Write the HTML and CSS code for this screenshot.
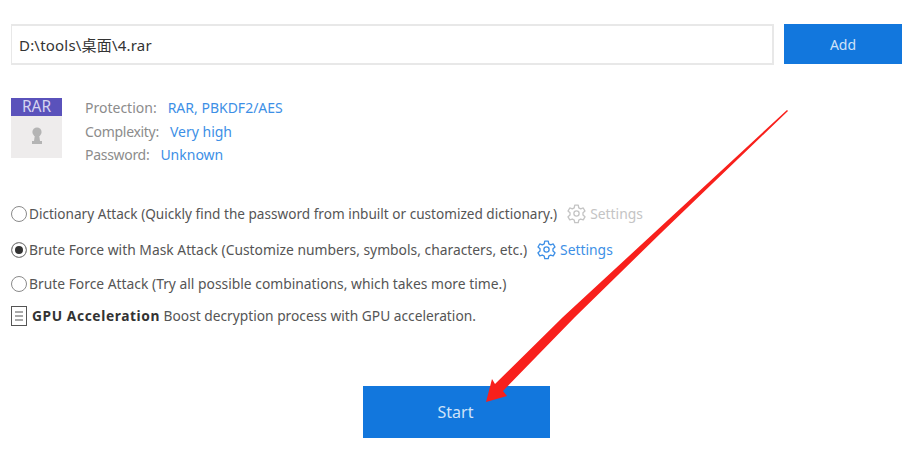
FILE: index.html
```html
<!DOCTYPE html>
<html lang="en">
<head>
    <meta charset="UTF-8">
    <title>Password recovery</title>
    <link rel="stylesheet" href="styles.css">
</head>
<body>

    <div class="page">
        <!-- file row -->
        <div class="file-row">
            <div class="file-path">D:\tools\桌面\4.rar</div>
            <button class="btn btn-add">Add</button>
        </div>

        <!-- archive info -->
        <div class="info">
            <div class="rar-icon">
                <div class="rar-label">RAR</div>
                <div class="rar-body">
                    <svg width="12" height="18" viewBox="0 0 12 18">
                        <circle cx="6" cy="5" r="4.6" fill="#b4b4b4"/>
                        <path d="M4 7h4l1 7H11v3H1v-3h2z" fill="#b4b4b4"/>
                    </svg>
                </div>
            </div>
            <div class="info-lines">
                <div><span class="info-key">Protection:</span><span class="info-val">RAR, PBKDF2/AES</span></div>
                <div><span class="info-key info-key-short">Complexity:</span><span class="info-val">Very high</span></div>
                <div><span class="info-key info-key-short">Password:</span><span class="info-val">Unknown</span></div>
            </div>
        </div>

        <!-- attack types -->
        <div class="options">
            <div class="option option-first">
                <span class="radio"></span>
                <span class="option-text text-dict">Dictionary Attack (Quickly find the password from inbuilt or customized dictionary.)</span>
                <span class="settings settings-off">
                    <svg class="gear" viewBox="0 0 24 24"><path d="M10 2.5h4l.6 3 2.2 1.2 2.9-1 2 3.5-2.3 2v2.6l2.3 2-2 3.5-2.900-1-2.200 1.200-.6 3h-4l-.6-3-2.200-1.200-2.900 1-2-3.500 2.300-2v-2.600l-2.300-2 2-3.500 2.900 1 2.200-1.200z"/><circle cx="12" cy="12" r="3"/></svg>
                    Settings
                </span>
            </div>
            <div class="option option-second">
                <span class="radio radio-on"></span>
                <span class="option-text">Brute Force with Mask Attack (Customize numbers, symbols, characters, etc.)</span>
                <span class="settings">
                    <svg class="gear" viewBox="0 0 24 24"><path d="M10 2.5h4l.6 3 2.2 1.2 2.9-1 2 3.5-2.3 2v2.6l2.3 2-2 3.5-2.900-1-2.200 1.200-.6 3h-4l-.6-3-2.200-1.200-2.900 1-2-3.500 2.300-2v-2.600l-2.300-2 2-3.500 2.900 1 2.200-1.200z"/><circle cx="12" cy="12" r="3"/></svg>
                    Settings
                </span>
            </div>
            <div class="option option-third">
                <span class="radio"></span>
                <span class="option-text">Brute Force Attack (Try all possible combinations, which takes more time.)</span>
            </div>
            <div class="option gpu">
                <svg class="gpu-icon" viewBox="0 0 16 20"><rect x=".5" y=".5" width="15" height="19"/><path d="M4 6h8M4 10h8M4 14h8"/></svg>
                <span class="gpu-text"><b>GPU Acceleration</b> Boost decryption process with GPU acceleration.</span>
            </div>
        </div>

        <div class="start-row">
            <button class="btn btn-start">Start</button>
        </div>
    </div>

    <!-- red annotation arrow -->
    <svg class="arrow" width="910" height="450" viewBox="0 0 910 450">
        <polygon points="486,402 492,379 495,384 563,317 655,232 787,110 788,111 661,233 575,317 503,391 507,396" fill="#f8201c"/>
    </svg>

</body>
</html>
```

FILE: styles.css
```css
body {
    margin: 0;
    background-color: white;
    font-family: "Noto Sans", "Noto Sans CJK SC", sans-serif;
    font-size: 14px;
    color: #555;
}

.page {
    width: 910px;
    height: 450px;
    padding: 24px 8px 0 11px;
    box-sizing: border-box;
}

.file-row {
    display: flex;
    gap: 10px;
}

.file-path {
    flex: 1;
    height: 41px;
    line-height: 39px;
    padding-left: 7px;
    box-sizing: border-box;
    border: 1px solid #e8e8e8;
    border-width: 2px 2px 2px 1px;
    color: #333;
    font-size: 15px;
    letter-spacing: 0.2px;
}

.btn {
    border: none;
    background-color: #1277dd;
    color: #cfe3f8;
    font-family: inherit;
    font-size: 14px;
    padding: 0;
}

.btn-add {
    width: 118px;
    height: 40px;
}

/* archive info */
.info {
    display: flex;
    gap: 23px;
    margin-top: 33px;
}

.rar-icon {
    width: 51px;
    height: 60px;
    background-color: #eeecec;
}

.rar-label {
    height: 18px;
    line-height: 17px;
    text-align: center;
    background-color: #5a52bb;
    color: #d5d3f0;
    font-size: 15.5px;
}

.rar-body {
    display: flex;
    justify-content: center;
    padding-top: 11px;
}

.info-lines {
    margin-top: -2px;
    line-height: 23.5px;
    color: #8c8c8c;
}

.info-key {
    margin-right: 11px;
}

.info-key-short {
    letter-spacing: -0.3px;
}

.info-val {
    color: #3d8fe6;
}

/* attack options */
.options {
    margin-top: 35px;
    font-size: 13.85px;
}

.option {
    display: flex;
    align-items: center;
    height: 24px;
}

.text-dict {
    font-size: 13.6px;
}

.option-second {
    margin-top: 12px;
}

.option-third {
    margin-top: 10px;
}

.gpu {
    margin-top: 8px;
    font-size: 13.75px;
}

.radio {
    width: 14px;
    height: 14px;
    margin-right: 2px;
    border: 1px solid #8a8a8a;
    border-radius: 50%;
    box-sizing: content-box;
    flex-shrink: 0;
}

.radio-on {
    background-color: #333;
    box-shadow: inset 0 0 0 3px white;
}

.settings {
    display: flex;
    align-items: center;
    gap: 3px;
    margin-left: 9px;
    color: #3d8fe6;
}

.settings-off {
    color: #c4c4c4;
}

.gear {
    width: 21px;
    height: 21px;
    fill: none;
    stroke: currentColor;
    stroke-width: 1.5;
    stroke-linejoin: round;
}

.gpu-icon {
    width: 16px;
    height: 20px;
    margin-right: 5px;
    fill: none;
    stroke: #555;
}

.gpu-text {
    color: #555;
}

.gpu-text b {
    color: #333;
    letter-spacing: 0.6px;
}

/* start button */
.start-row {
    margin-top: 58px;
    padding-left: 352px;
}

.btn-start {
    width: 187px;
    height: 52px;
    padding-right: 2px;
    font-size: 16px;
}

.arrow {
    position: absolute;
    left: 0;
    top: 0;
    pointer-events: none;
}
```
